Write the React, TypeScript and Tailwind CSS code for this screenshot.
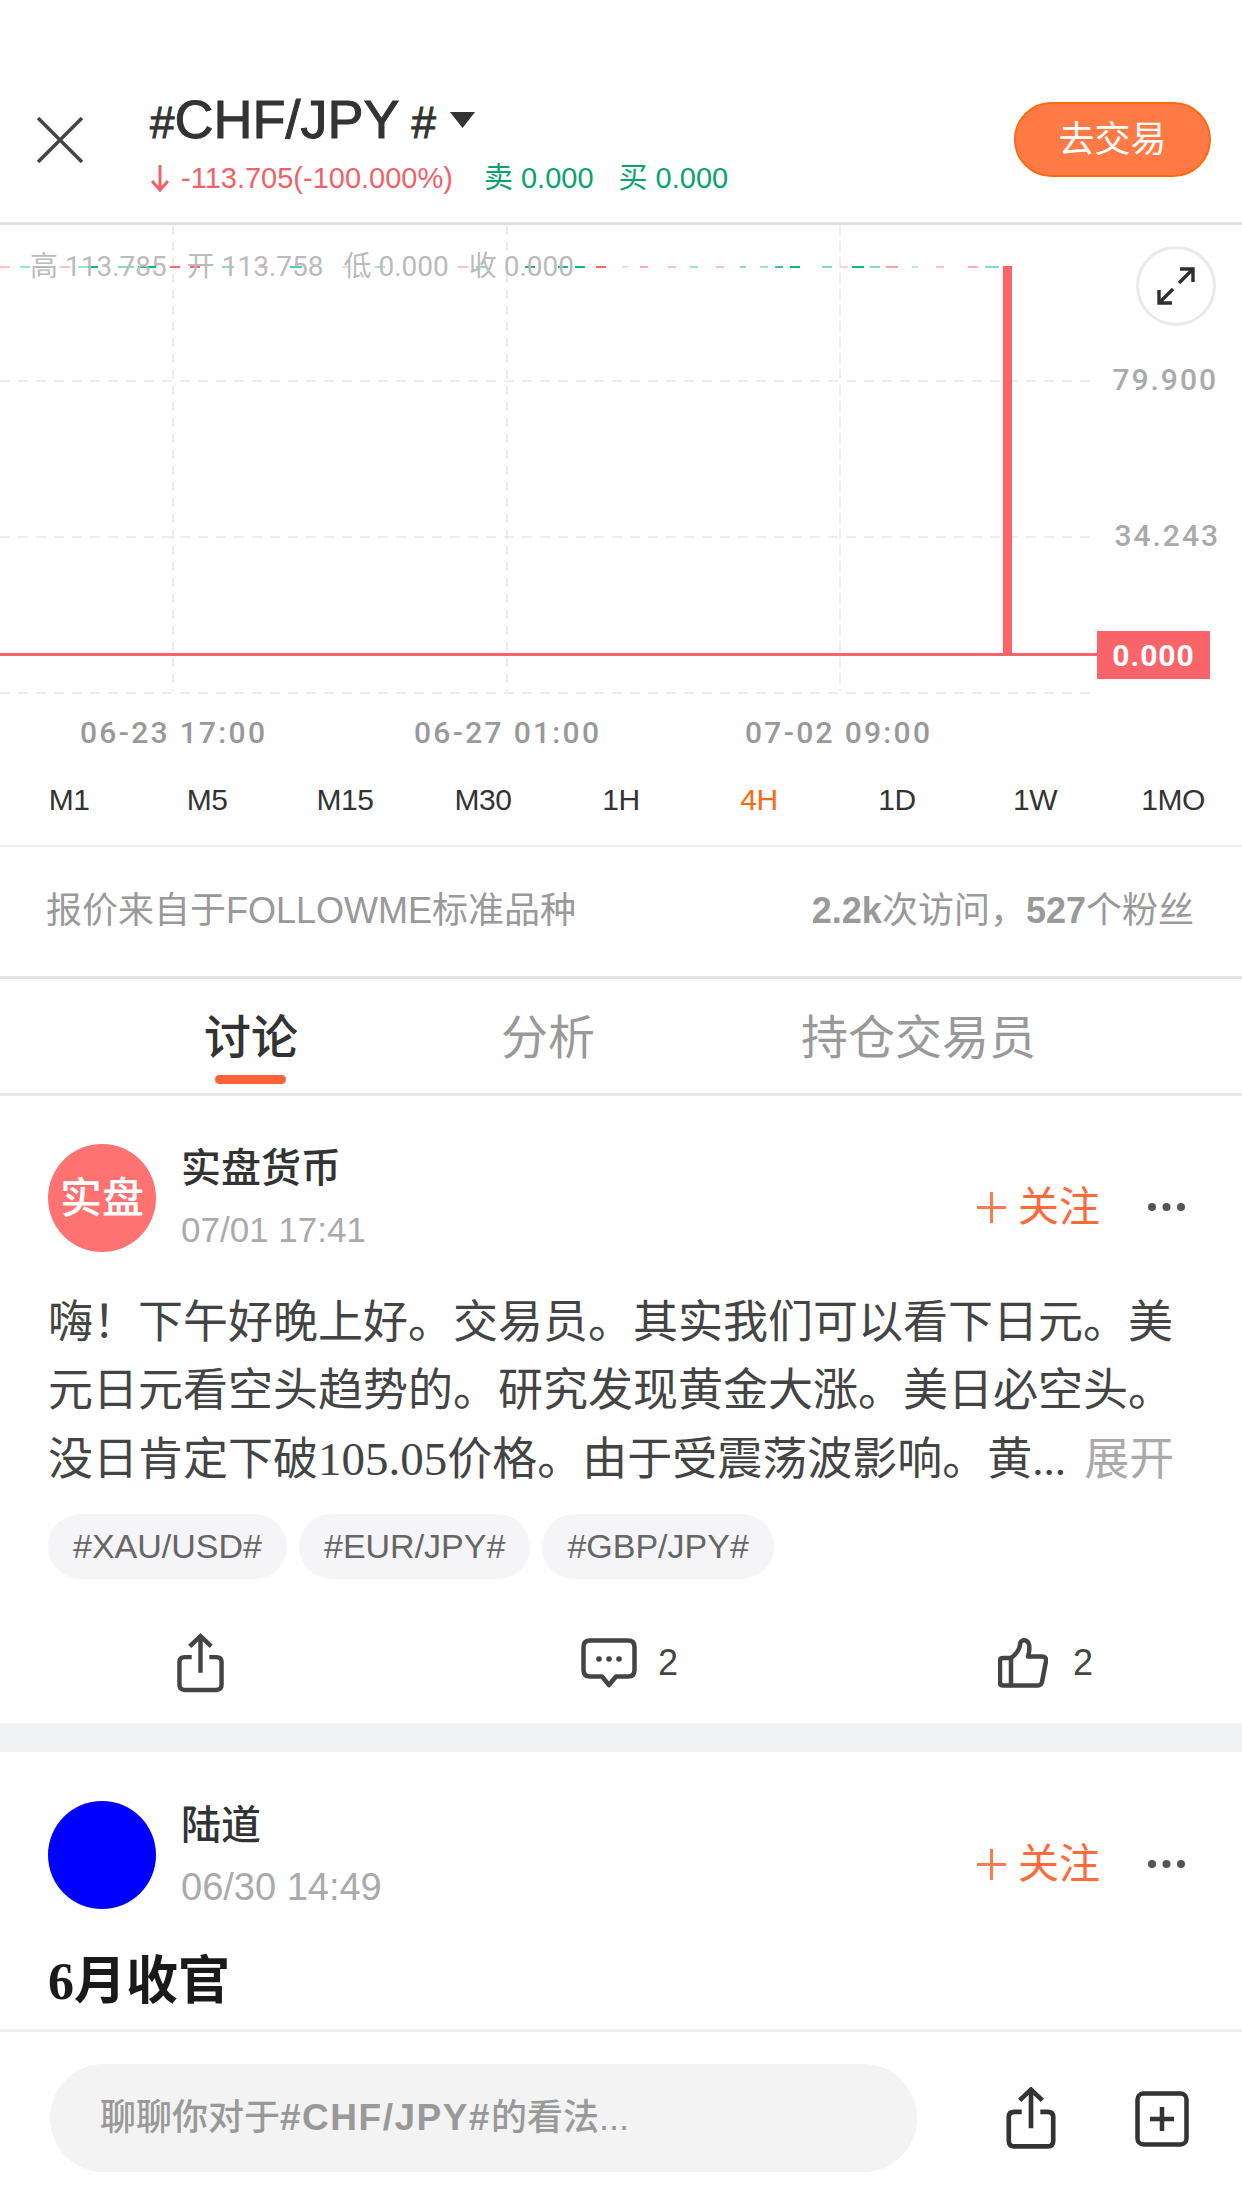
import React from "react";

const SANS = "font-['Liberation_Sans','Noto_Sans_CJK_SC',sans-serif]";

const timeframes = ["M1", "M5", "M15", "M30", "1H", "4H", "1D", "1W", "1MO"];
const tags = ["#XAU/USD#", "#EUR/JPY#", "#GBP/JPY#"];

// x, width, color, opacity of the flat candles that run along the top of the chart
const candles: [number, number, string, number][] = [
  [0, 10, "#f66", 0.4], [20, 10, "#0bb88a", 0.4], [36, 14, "#0bb88a", 1], [60, 10, "#f66", 0.4], [78, 10, "#0bb88a", 0.4],
  [88, 10, "#0bb88a", 1], [118, 16, "#0bb88a", 0.5], [138, 18, "#0bb88a", 1], [170, 10, "#f66", 1], [190, 10, "#f66", 1],
  [222, 12, "#0bb88a", 0.5], [258, 10, "#f66", 0.4], [290, 12, "#0bb88a", 0.7], [342, 8, "#f66", 0.3], [375, 10, "#0bb88a", 0.4],
  [458, 10, "#f66", 0.4], [476, 10, "#0bb88a", 0.5], [525, 10, "#0bb88a", 1], [558, 10, "#0bb88a", 1], [575, 10, "#0bb88a", 1],
  [596, 10, "#f66", 1], [622, 6, "#f66", 0.3], [640, 8, "#f66", 0.5], [668, 8, "#f66", 0.4], [690, 8, "#0bb88a", 0.4],
  [716, 8, "#f66", 0.4], [740, 6, "#0bb88a", 0.5], [760, 8, "#0bb88a", 0.4], [775, 8, "#0bb88a", 0.8],
  [790, 10, "#0bb88a", 1], [822, 10, "#0bb88a", 0.5], [840, 8, "#f66", 0.3],
  [852, 12, "#0bb88a", 1], [870, 10, "#0bb88a", 0.5], [886, 12, "#f66", 0.6], [912, 6, "#0bb88a", 0.3], [936, 8, "#f66", 0.4],
  [968, 10, "#f66", 0.5], [985, 14, "#0bb88a", 0.5],
];

function ChartLines() {
  return (
    <svg width="1242" height="500" className="block">
      {[173, 507, 840].map((x) => (
        <line key={x} x1={x} y1="0" x2={x} y2="466" stroke="#e8e8e8" strokeWidth="1.5" strokeDasharray="10 6" />
      ))}
      {[156, 312, 468].map((y) => (
        <line key={y} x1="0" y1={y} x2="1090" y2={y} stroke="#e8e8e8" strokeWidth="1.5" strokeDasharray="10 8" />
      ))}
      {candles.map(([x, w, c, o]) => (
        <rect key={x} x={x} y="41" width={w} height="2" fill={c} opacity={o} />
      ))}
      <rect x="0" y="428" width="1100" height="3" fill="#f9646b" />
      <rect x="1003" y="41" width="9" height="390" fill="#fb6468" />
    </svg>
  );
}

function ExpandIcon() {
  return (
    <svg width="42" height="42" viewBox="0 0 42 42" fill="none" stroke="#2f2f2f" strokeWidth="3.4">
      <path d="M24 18 L38 4 M25 4 H38 V17" />
      <path d="M18 24 L4 38 M4 25 V38 H17" />
    </svg>
  );
}

function ShareIcon({ w, h, color }: { w: number; h: number; color: string }) {
  return (
    <svg width={w} height={h} viewBox="0 0 48 60" fill="none" stroke={color} strokeWidth="4.500" className="shrink-0">
      <path d="M24 40 V3 M13 13 L24 2.500 L35 13" />
      <path d="M15 24 H8 Q2.500 24 2.500 29 V52 Q2.500 57.500 8 57.500 H40 Q45.500 57.500 45.500 52 V29 Q45.500 24 40 24 H33" />
    </svg>
  );
}

function CommentIcon() {
  return (
    <svg width="56" height="50" viewBox="0 0 56 50" fill="none" stroke="#444" strokeWidth="4.500" className="shrink-0">
      <path d="M9 2.500 H47 Q53.500 2.500 53.500 9 V32 Q53.500 38.500 47 38.500 H35 L28 47 L21 38.500 H9 Q2.500 38.500 2.500 32 V9 Q2.500 2.500 9 2.500 Z" strokeLinejoin="round" />
      <circle cx="18" cy="21" r="2.800" fill="#444" stroke="none" />
      <circle cx="28" cy="21" r="2.800" fill="#444" stroke="none" />
      <circle cx="38" cy="21" r="2.800" fill="#444" stroke="none" />
    </svg>
  );
}

function ThumbIcon() {
  return (
    <svg width="50" height="50" viewBox="0 0 50 50" fill="none" stroke="#444" strokeWidth="4.500" strokeLinejoin="round" className="shrink-0">
      <path d="M13 47.500 H40 Q43 47.500 44 44 L48 23 Q48.500 18.500 44 18.500 H30 Q32.500 10 30.500 5 Q28.500 1.500 24.500 2.500 Q22 3.500 22 7 Q21 14 13 20 Z" />
      <path d="M13 20 H5 Q2 20 2 23 V44.500 Q2 47.500 5 47.500 H13" />
    </svg>
  );
}

function Plus() {
  return (
    <svg width="29" height="35" viewBox="0 0 29 35" stroke="#ff7a50" strokeWidth="3" className="shrink-0">
      <path d="M14.500 2 V33 M0 17.500 H29" />
    </svg>
  );
}

function Dots() {
  return (
    <svg width="39" height="10" viewBox="0 0 39 10" fill="#555" className="shrink-0">
      <circle cx="5" cy="5" r="4" />
      <circle cx="19.500" cy="5" r="4" />
      <circle cx="34" cy="5" r="4" />
    </svg>
  );
}

function PostHeader({ name, time, timeSize, avatar }: { name: string; time: string; timeSize: string; avatar: React.ReactNode }) {
  return (
    <div className="flex items-center h-[108px] pl-[48px] pr-[56px]">
      {avatar}
      <div className="ml-[25px] flex-1 flex flex-col">
        <span className="text-[40px] leading-[46px] font-medium text-[#333]">{name}</span>
        <span className={`mt-[18px] leading-[42px] text-[#aaa] ${timeSize}`}>{time}</span>
      </div>
      <div className="flex items-center mt-[18px]">
        <Plus />
        <span className="ml-[12px] text-[41px] leading-[46px] text-[#ff6a3d]">关注</span>
        <span className="ml-[47px]"><Dots /></span>
      </div>
    </div>
  );
}

export default function App() {
  return (
    <div className={`w-[1242px] h-[2208px] overflow-hidden bg-white flex flex-col ${SANS}`}>
      {/* Top bar */}
      <header className="h-[225px] shrink-0 flex items-start border-b-[3px] border-[#e2e2e2]">
        <svg width="46" height="46" viewBox="0 0 46 46" stroke="#444" strokeWidth="3.500" className="ml-[37px] mt-[117px] shrink-0">
          <path d="M1 1 L45 45 M45 1 L1 45" />
        </svg>
        <div className="ml-[67px] mt-[91px] flex-1">
          <div className="flex items-center h-[60px]">
            <span className="text-[54px] leading-[60px] text-[#333] [-webkit-text-stroke:1px_#333]">
              <span className="text-[44px]">#</span>CHF/JPY<span className="text-[44px] ml-[12px]">#</span>
            </span>
            <svg width="25" height="16" viewBox="0 0 25 16" fill="#333" className="ml-[14px] mb-[2px]">
              <path d="M0 0 H25 L12.500 16 Z" />
            </svg>
          </div>
          <div className="flex items-center mt-[9px] text-[29px] leading-[36px]">
            <svg width="20" height="28" viewBox="0 0 20 28" fill="none" stroke="#f0626a" strokeWidth="3" className="shrink-0">
              <path d="M10 1 V26 M2 17 L10 26 L18 17" />
            </svg>
            <span className="ml-[11px] text-[#f0626a]">-113.705(-100.000%)</span>
            <span className="ml-[31px] text-[#0aa36e]">卖 0.000</span>
            <span className="ml-[25px] text-[#0aa36e]">买 0.000</span>
          </div>
        </div>
        <button className="mt-[102px] mr-[31px] w-[197px] h-[75px] rounded-full bg-[#ff7a45] border-2 border-[#ff6a10] text-white text-[36px]">
          去交易
        </button>
      </header>

      {/* Chart */}
      <div className="relative h-[478px] shrink-0">
        <ChartLines />
        <div className="absolute left-[30px] top-[24px] flex gap-[20px] text-[28px] leading-[36px] text-[#bbb] font-['Roboto','Noto_Sans_CJK_SC',sans-serif]">
          <span>高 113.785</span>
          <span>开 113.758</span>
          <span>低 0.000</span>
          <span>收 0.000</span>
        </div>
        <div className="absolute left-[1136px] top-[21px] w-[80px] h-[80px] rounded-full border-[3px] border-[#eaeaea] bg-white flex items-center justify-center">
          <ExpandIcon />
        </div>
        <span className="absolute right-[24px] top-[137px] text-[30px] leading-[36px] font-medium text-[#aaa] tracking-[2px] font-['Roboto',sans-serif]">79.900</span>
        <span className="absolute right-[22px] top-[293px] text-[30px] leading-[36px] font-medium text-[#aaa] tracking-[2px] font-['Roboto',sans-serif]">34.243</span>
        <span className="absolute left-[1097px] top-[406px] w-[113px] h-[48px] bg-[#f9646b] text-white text-[30px] font-bold tracking-[1px] flex items-center justify-center font-['Roboto',sans-serif]">0.000</span>
      </div>

      {/* Time axis */}
      <div className="relative h-[56px] shrink-0 text-[30px] leading-[36px] font-medium text-[#999] tracking-[2.300px] font-['Roboto',sans-serif]">
        <span className="absolute left-[80px] top-[12px]">06-23 17:00</span>
        <span className="absolute left-[414px] top-[12px]">06-27 01:00</span>
        <span className="absolute left-[745px] top-[12px]">07-02 09:00</span>
      </div>

      {/* Timeframes */}
      <div className="grid grid-cols-9 h-[86px] pb-[6px] shrink-0 items-center text-[30px] text-[#333] text-center tracking-[-0.5px]">
        {timeframes.map((t) => (
          <span key={t} className={t === "4H" ? "text-[#ff6a10]" : ""}>{t}</span>
        ))}
      </div>

      {/* Source / stats */}
      <div className="h-[134px] pb-[2px] shrink-0 border-y-2 border-[#f0f0f2] border-b-[3px] border-b-[#e4e4e8] flex items-center justify-between pl-[46px] pr-[48px] text-[36px] text-[#999]">
        <span>报价来自于FOLLOWME标准品种</span>
        <span><b>2.2k</b>次访问{"\uFF0C"}<b>527</b>个粉丝</span>
      </div>

      {/* Tabs */}
      <div className="relative h-[117px] shrink-0 border-b-[3px] border-[#e8e8ec] text-[47px] leading-[56px]">
        <span className="absolute left-[204px] top-[31px] font-medium text-[#333]">讨论</span>
        <span className="absolute left-[501px] top-[31px] text-[#999]">分析</span>
        <span className="absolute left-[801px] top-[31px] text-[#999]">持仓交易员</span>
        <span className="absolute left-[215px] top-[96px] w-[71px] h-[9px] rounded-full bg-[#ff6236]" />
      </div>

      {/* Feed */}
      <div className="flex-1 min-h-0 overflow-hidden">
        <article className="pt-[48px] h-[627px]">
          <PostHeader
            name="实盘货币"
            time="07/01 17:41"
            timeSize="text-[35px]"
            avatar={
              <div className="w-[108px] h-[108px] rounded-full bg-[#ff7272] text-white text-[42px] font-medium flex items-center justify-center shrink-0">
                实盘
              </div>
            }
          />
          <div className="mt-[37px] px-[48px] text-[45px] leading-[68px] text-[#444] font-['Liberation_Serif','Noto_Sans_CJK_SC',serif] whitespace-nowrap">
            <p>嗨{"\uFF01"}下午好晚上好。交易员。其实我们可以看下日元。美</p>
            <p>元日元看空头趋势的。研究发现黄金大涨。美日必空头。</p>
            <p>没日肯定下破<span className="text-[47px]">105.05</span>价格。由于受震荡波影响。黄... <span className="ml-[7px] text-[#aaa]">展开</span></p>
          </div>
          <div className="mt-[20px] pl-[48px] flex gap-[12px]">
            {tags.map((t) => (
              <span key={t} className="h-[65px] px-[25px] rounded-full bg-[#f5f5f7] text-[34px] text-[#666] flex items-center">{t}</span>
            ))}
          </div>
          <div className="mt-[54px] flex items-center h-[60px] text-[36px] text-[#444]">
            <span className="ml-[177px]"><ShareIcon w={47} h={60} color="#444" /></span>
            <span className="ml-[357px]"><CommentIcon /></span>
            <span className="ml-[21px]">2</span>
            <span className="ml-[320px]"><ThumbIcon /></span>
            <span className="ml-[25px]">2</span>
          </div>
        </article>
        <div className="h-[29px] bg-[#f1f2f4]" />
        <article className="pt-[49px]">
          <PostHeader
            name="陆道"
            time="06/30 14:49"
            timeSize="text-[38px]"
            avatar={<div className="w-[108px] h-[108px] rounded-full bg-[#0000ff] shrink-0" />}
          />
          <h2 className="mt-[43px] pl-[48px] text-[52px] leading-[60px] font-bold text-[#1a1a1a] font-['Liberation_Serif','Noto_Sans_CJK_SC',serif]">6月收官</h2>
        </article>
      </div>

      {/* Bottom bar */}
      <footer className="h-[179px] shrink-0 border-t-[3px] border-[#efefef] flex items-start">
        <div className="ml-[50px] mt-[32px] w-[867px] h-[108px] rounded-full bg-[#f3f3f3] flex items-center pl-[50px] text-[36px] font-medium text-[#999]">
          <span>聊聊你对于<b className="text-[37px] tracking-[1.500px]">#CHF/JPY#</b>的看法...</span>
        </div>
        <span className="ml-[89px] mt-[55px]"><ShareIcon w={50} h={62} color="#333" /></span>
        <svg width="54" height="56" viewBox="0 0 54 56" fill="none" stroke="#333" strokeWidth="4.500" className="ml-[79px] mt-[59px] shrink-0">
          <rect x="2.500" y="2.500" width="49" height="51" rx="6" />
          <path d="M27 16 V40 M15 28 H39" />
        </svg>
      </footer>
    </div>
  );
}
